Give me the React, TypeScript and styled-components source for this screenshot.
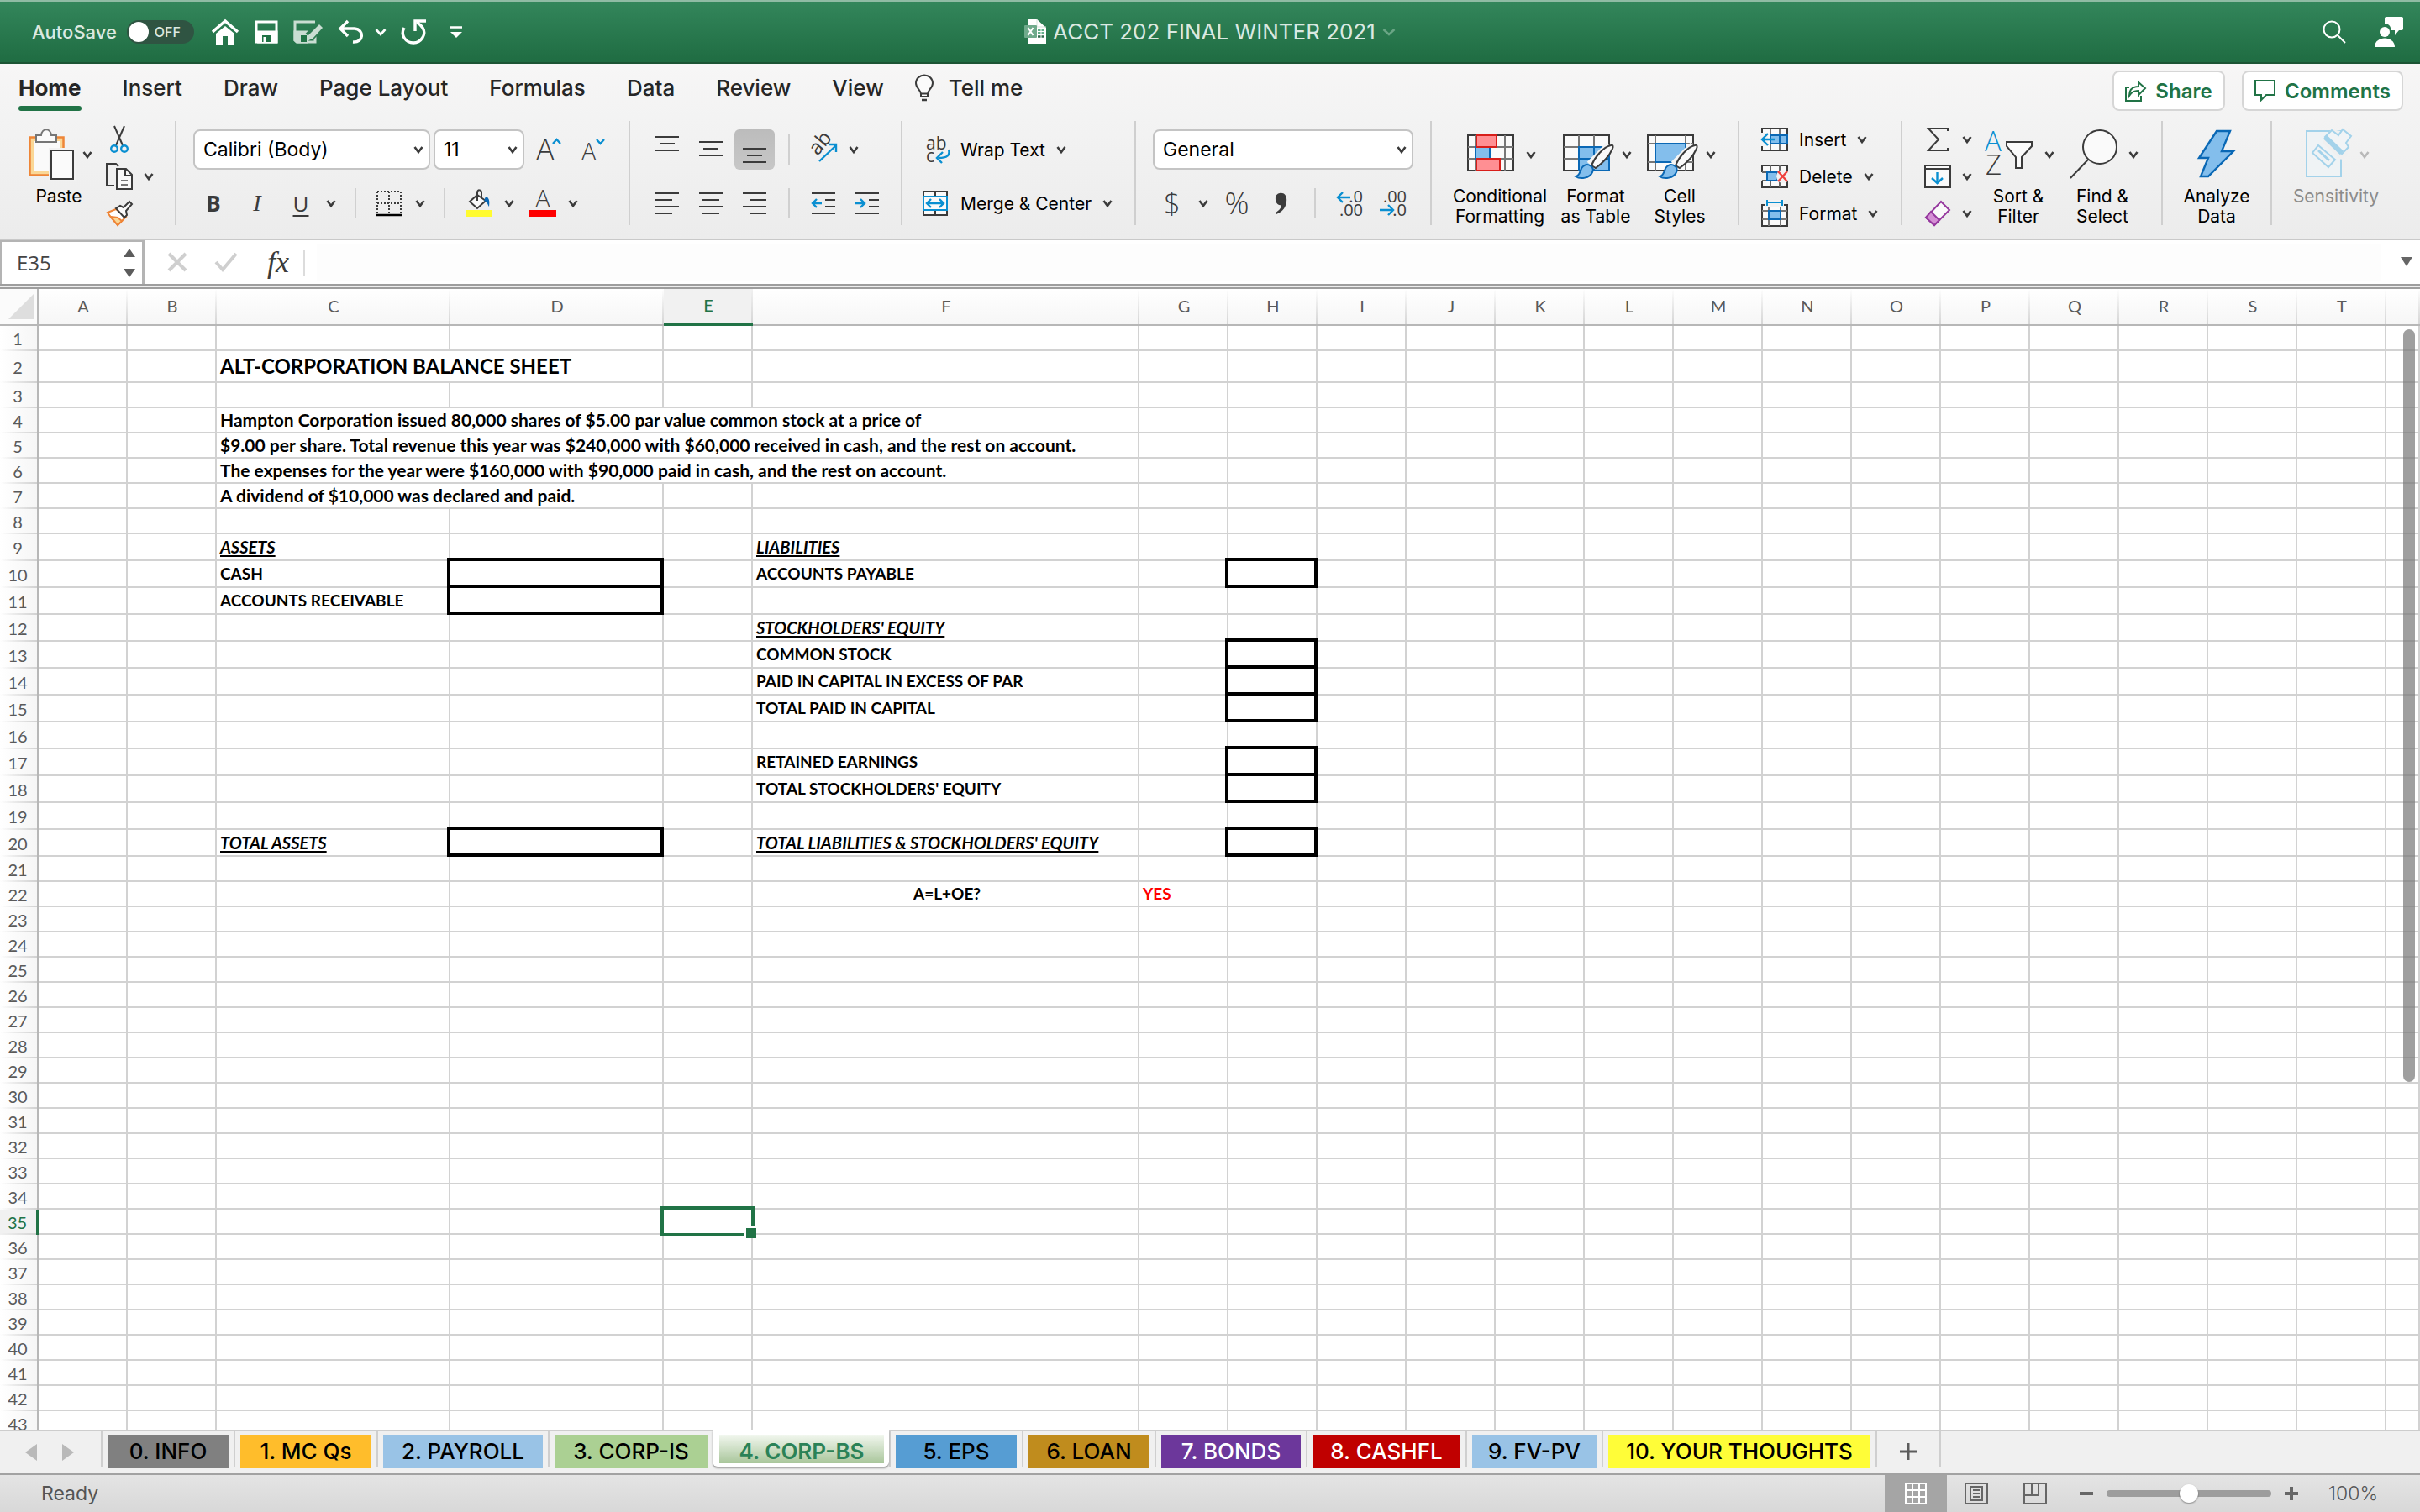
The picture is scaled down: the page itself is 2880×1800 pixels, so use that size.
import React from "react";
import styled, { createGlobalStyle, css } from "styled-components";

const UI = `Inter, "Liberation Sans", sans-serif`;
const CELL = `Lato, "Liberation Sans", sans-serif`;
const INK = "#3b3b3b";
const BLUE = "#0a8fd1";
const DEEP = "#0a68b5";
const SKY = "#83beec";
const GREEN = "#217346";
const LINE = "#d2d2d2";

const Global = createGlobalStyle`
  * { box-sizing: border-box; }
  html, body { margin: 0; height: 100%; }
  body { font-family: ${UI}; background: #fff; color: #000; overflow: hidden; }
  button, input, select { font: inherit; color: inherit; margin: 0; }
  svg { display: block; flex: none; overflow: visible; }
`;

const Window = styled.div`
  display: flex;
  flex-direction: column;
  height: 100vh;
`;

/* ---------- title bar ---------- */

const TitleBar = styled.header`
  display: grid;
  grid-template-columns: 1fr auto 1fr;
  align-items: center;
  height: 76px;
  padding: 0 20px;
  border-top: 2px solid #8fbba4;
  border-bottom: 2px solid #1c5434;
  background: linear-gradient(#33865b, #1f6c42);
  color: #dbe9e1;
`;

const TitleSide = styled.div<{ $end?: boolean }>`
  display: flex;
  align-items: center;
  justify-content: ${(p) => (p.$end ? "flex-end" : "flex-start")};
`;

const AutoSave = styled.label`
  display: flex;
  align-items: center;
  gap: 12px;
  margin: 0 20px 0 18px;
  font-size: 22px;
  font-weight: 500;
`;

const Track = styled.span`
  position: relative;
  display: flex;
  align-items: center;
  justify-content: flex-end;
  width: 80px;
  height: 28px;
  padding-right: 16px;
  border-radius: 14px;
  background: #2f5442;
  font-size: 16px;
`;

const Switch = styled.input`
  position: absolute;
  left: 2px;
  top: 2px;
  width: 24px;
  height: 24px;
  appearance: none;
  border-radius: 50%;
  background: #fff;
`;

const PlainButton = styled.button<{ $ml?: number; $w?: number }>`
  display: flex;
  align-items: center;
  justify-content: center;
  flex: none;
  width: ${(p) => (p.$w ? `${p.$w}px` : "auto")};
  margin-left: ${(p) => p.$ml ?? 0}px;
  padding: 0;
  border: 0;
  background: none;
  white-space: nowrap;
`;

const DocTitle = styled.h1`
  display: flex;
  align-items: center;
  gap: 8px;
  margin: 0;
  font-size: 26px;
  line-height: 32px;
  font-weight: 400;
`;

/* ---------- ribbon tabs ---------- */

const TabStrip = styled.div`
  display: flex;
  justify-content: space-between;
  height: 64px;
  padding: 0 20px 0 22px;
  background: linear-gradient(#f7f6f6, #f3f3f3);
`;

const TabLinks = styled.nav`
  display: flex;
  gap: 49px;
  padding-top: 12px;
`;

const TabLink = styled.a<{ $on?: boolean; $tight?: boolean }>`
  position: relative;
  display: flex;
  align-items: center;
  gap: 18px;
  height: 34px;
  margin-left: ${(p) => (p.$tight ? "-12px" : "0")};
  color: #262626;
  font-size: 26px;
  line-height: 34px;
  font-weight: ${(p) => (p.$on ? 700 : 500)};
  text-decoration: none;
  ${(p) =>
    p.$on &&
    css`
      &::after {
        content: "";
        position: absolute;
        left: 0;
        right: 0;
        bottom: -10px;
        height: 6px;
        border-radius: 3px;
        background: ${GREEN};
      }
    `}
`;

const TabActions = styled.div`
  display: flex;
  gap: 20px;
  padding-top: 8px;
`;

const OutlineButton = styled.button<{ $w: number }>`
  display: flex;
  align-items: center;
  justify-content: center;
  gap: 10px;
  width: ${(p) => p.$w}px;
  height: 48px;
  padding: 0;
  border: 2px solid #d6d6d6;
  border-radius: 8px;
  background: #fff;
  color: ${GREEN};
  font-size: 24px;
  font-weight: 600;
`;

/* ---------- ribbon ---------- */

const Ribbon = styled.section`
  display: flex;
  height: 146px;
  padding-top: 4px;
  border-bottom: 2px solid #c9c9c9;
  background: linear-gradient(#f3f3f3, #ececec);
`;

const Group = styled.div<{ $w: number; $pl?: number; $last?: boolean }>`
  display: flex;
  flex: none;
  width: ${(p) => p.$w}px;
  height: 124px;
  padding-left: ${(p) => p.$pl ?? 0}px;
  border-right: ${(p) => (p.$last ? 0 : 2)}px solid #cfcfcf;
`;

const Rows = styled.div`
  display: flex;
  flex-direction: column;
  gap: 16px;
  padding-top: 10px;
`;

const Row = styled.div`
  display: flex;
  align-items: center;
  height: 48px;
`;

const Stack = styled.div`
  display: flex;
  flex-direction: column;
`;

const ClipStack = styled(Stack)`
  margin-left: 14px;
`;

const StackItem = styled.button`
  display: flex;
  align-items: center;
  gap: 13px;
  height: 44px;
  flex: none;
  padding: 0;
  border: 0;
  background: none;
  font-size: 21px;
  white-space: nowrap;
`;

const IconSlot = styled.span`
  display: flex;
  justify-content: center;
  width: 32px;
`;

const Big = styled.button<{ $w: number; $ml?: number; $dim?: boolean }>`
  display: flex;
  flex-direction: column;
  align-items: center;
  flex: none;
  gap: 8px;
  width: ${(p) => p.$w}px;
  height: 124px;
  margin-left: ${(p) => p.$ml ?? 0}px;
  padding: 10px 0 0;
  border: 0;
  background: none;
  color: ${(p) => (p.$dim ? "#8b8b8b" : "#000")};
  font-size: 21px;
  line-height: 24px;
  white-space: pre;
`;

const BigIcon = styled.span<{ $menu?: boolean }>`
  display: flex;
  align-items: center;
  gap: 10px;
  height: 60px;
  padding-left: ${(p) => (p.$menu ? 4 : 0)}px;
`;

const Rule = styled.span<{ $ml: number }>`
  flex: none;
  width: 2px;
  height: 36px;
  margin-left: ${(p) => p.$ml}px;
  background: #d0d0d0;
`;

const Pressed = styled(PlainButton)`
  height: 48px;
  border-radius: 6px;
  background: linear-gradient(#bcbcbc, #c7c7c7);
`;

const SelectBox = styled.div<{ $w: number; $ml?: number }>`
  position: relative;
  flex: none;
  width: ${(p) => p.$w}px;
  height: 48px;
  margin-left: ${(p) => p.$ml ?? 0}px;
  svg {
    position: absolute;
    right: 8px;
    top: 20px;
    pointer-events: none;
  }
`;

const Select = styled.select`
  appearance: none;
  width: 100%;
  height: 100%;
  padding: 0 28px 0 10px;
  border: 2px solid #c4c4c4;
  border-radius: 8px;
  background: #fff;
  font-size: 23px;
`;

const Glyph = styled.span<{ $size?: number; $weight?: number; $italic?: boolean; $serif?: boolean; $under?: boolean }>`
  color: ${INK};
  font-family: ${(p) => (p.$serif ? `"Liberation Serif", serif` : `"Open Sans", sans-serif`)};
  font-size: ${(p) => p.$size ?? 26}px;
  line-height: 30px;
  font-weight: ${(p) => p.$weight ?? 400};
  font-style: ${(p) => (p.$italic ? "italic" : "normal")};
  text-decoration: ${(p) => (p.$under ? "underline" : "none")};
  text-underline-offset: 4px;
  text-decoration-thickness: 2px;
`;

/* ---------- formula bar ---------- */

const FormulaBar = styled.section`
  display: flex;
  height: 52px;
  flex: none;
  background: #fff;
`;

const NameBox = styled.div`
  display: flex;
  align-items: center;
  width: 172px;
  padding-right: 8px;
  border: solid #b4b4b4;
  border-width: 2px 3px 0 2px;
`;

const NameInput = styled.input`
  flex: 1;
  min-width: 0;
  height: 46px;
  padding: 0 0 2px 18px;
  border: 0;
  background: none;
  color: #444;
  font-size: 24px;
  font-family: "Open Sans", sans-serif;
  outline: none;
`;

const FormulaRule = styled.span`
  width: 2px;
  height: 30px;
  margin: 12px 0 0 14px;
  background: #dcdcdc;
`;

const FormulaInput = styled.input`
  flex: 1;
  height: 44px;
  margin: 4px 24px 4px 14px;
  border: 0;
  background: #fdfdfd;
  outline: none;
`;

const ExpandButton = styled(PlainButton)`
  margin-right: 9px;
`;

const Splitter = styled.div`
  flex: none;
  height: 6px;
  border: solid #9e9e9e;
  border-width: 2px 0;
  background: #efefef;
`;

/* ---------- grid ---------- */

const Sheet = styled.main`
  position: relative;
  flex: 1;
  min-height: 0;
  overflow: hidden;
`;

const Grid = styled.table`
  width: 100%;
  table-layout: fixed;
  border-spacing: 0;
  border-collapse: separate;
  font-family: ${CELL};
`;

const ColHead = styled.th<{ $on?: boolean }>`
  height: 44px;
  padding: 0 0 2px;
  border-bottom: ${(p) => (p.$on ? `4px solid ${GREEN}` : "2px solid #b7b7b7")};
  background: linear-gradient(rgba(208, 208, 208, 0), #d6d6d6) right / 2px 100% no-repeat,
    ${(p) => (p.$on ? "#f1f1f1" : "linear-gradient(#fff, #f6f6f6)")};
  color: ${(p) => (p.$on ? GREEN : "#5a5a5a")};
  font-size: 20px;
  line-height: 24px;
  font-weight: 400;
`;

const Corner = styled.th`
  height: 44px;
  padding: 0 4px 0 0;
  border-right: 2px solid #b7b7b7;
  border-bottom: 2px solid #b7b7b7;
  background: #fbfbfb;
  svg { margin-left: auto; }
`;

const RowHead = styled.th<{ $on?: boolean }>`
  padding: 0 2px 0 0;
  border-right: ${(p) => (p.$on ? `3px solid ${GREEN}` : "2px solid #b7b7b7")};
  background: linear-gradient(90deg, rgba(208, 208, 208, 0), #d2d2d2) bottom / 100% 2px no-repeat,
    ${(p) => (p.$on ? "#f1f1f1" : "linear-gradient(90deg, #fff, #f6f6f6)")};
  color: ${(p) => (p.$on ? GREEN : "#5a5a5a")};
  font-size: 20px;
  line-height: 24px;
  font-weight: 400;
`;

type CellLook = {
  $title?: boolean;
  $prose?: boolean;
  $head?: boolean;
  $box?: boolean;
  $sel?: boolean;
  $red?: boolean;
  $center?: boolean;
};

const cellSize = (p: CellLook) => (p.$title ? 24 : p.$prose ? 21 : p.$head ? 20 : 19);

const Cell = styled.td<CellLook>`
  position: relative;
  padding: 0 0 0 4px;
  border-right: 2px solid ${LINE};
  border-bottom: 2px solid ${LINE};
  color: ${(p) => (p.$red ? "#f00" : "#000")};
  font-size: ${cellSize}px;
  line-height: 24px;
  font-weight: 700;
  font-style: ${(p) => (p.$head ? "italic" : "normal")};
  text-decoration: ${(p) => (p.$head ? "underline" : "none")};
  text-decoration-thickness: 2px;
  text-decoration-skip-ink: none;
  text-underline-offset: 2px;
  text-align: ${(p) => (p.$center ? "center" : "left")};
  white-space: nowrap;
  ${(p) =>
    p.$box &&
    css`
      &::after {
        content: "";
        position: absolute;
        inset: -4px -2px -2px -4px;
        border: 4px solid #000;
      }
    `}
  ${(p) =>
    p.$sel &&
    css`
      z-index: 1;
      &::before {
        content: "";
        position: absolute;
        inset: -4px;
        border: 4px solid ${GREEN};
      }
      &::after {
        content: "";
        position: absolute;
        right: -6px;
        bottom: -6px;
        width: 12px;
        height: 12px;
        border: solid #fff;
        border-width: 2px 0 0 2px;
        background: ${GREEN};
      }
    `}
`;

const ScrollThumb = styled.div`
  position: absolute;
  z-index: 2;
  top: 48px;
  right: 6px;
  width: 14px;
  height: 66%;
  border-radius: 7px;
  background: rgba(118, 118, 118, 0.7);
`;

/* ---------- sheet tabs ---------- */

const SheetBar = styled.nav`
  display: flex;
  flex: none;
  height: 52px;
  border-top: 2px solid #cdcdcd;
  background: #f0f0f0;
`;

const SheetArrows = styled.div`
  display: flex;
  gap: 30px;
  width: 120px;
  height: 50px;
  padding: 15px 0 0 30px;
`;

const SheetSlot = styled.div`
  padding: 4px 6px 0;
  border-left: 2px solid #cfcfcf;
  height: 42px;
`;

const SheetTab = styled.button<{ $w: number; $bg: string; $fg: string }>`
  display: block;
  width: ${(p) => p.$w}px;
  height: 40px;
  padding: 0;
  border: 0;
  background: ${(p) => p.$bg};
  color: ${(p) => p.$fg};
  font-size: 26px;
  font-weight: 500;
  line-height: 40px;
  white-space: nowrap;
`;

const ActiveSlot = styled.div`
  position: relative;
  flex: none;
  height: 44px;
  margin-top: -2px;
  padding: 6px 6px 4px 8px;
  border-radius: 0 0 6px 6px;
  background: #fff;
  box-shadow: 0 2px 2px #9a9a9a;
`;

const ActiveTab = styled(SheetTab)`
  height: 34px;
  line-height: 40px;
  font-weight: 600;
`;

const AddSlot = styled.div`
  display: flex;
  align-items: center;
  justify-content: center;
  width: 78px;
  height: 42px;
  padding-top: 6px;
  border: solid #cfcfcf;
  border-width: 0 2px;
`;

/* ---------- status bar ---------- */

const StatusBar = styled.footer`
  display: flex;
  align-items: center;
  flex: none;
  height: 46px;
  padding: 0 49px;
  border-top: 2px solid #a2a2a2;
  background: linear-gradient(#e4e4e4, #d8d8d8);
  color: #555;
  font-size: 23px;
`;

const StatusText = styled.span`
  flex: 1;
`;

const ViewButton = styled.button<{ $on?: boolean }>`
  display: flex;
  align-items: center;
  justify-content: center;
  width: ${(p) => (p.$on ? 74 : 70)}px;
  height: 44px;
  padding: 0;
  border: 0;
  background: ${(p) => (p.$on ? "#a5a5a5" : "none")};
`;

const Zoom = styled.input`
  width: 196px;
  height: 24px;
  margin: 0 16px;
  appearance: none;
  background: none;
  &::-webkit-slider-runnable-track {
    height: 8px;
    border-radius: 4px;
    background: #9d9d9d;
  }
  &::-webkit-slider-thumb {
    appearance: none;
    width: 22px;
    height: 22px;
    margin-top: -7px;
    border-radius: 50%;
    background: #fff;
    box-shadow: 0 1px 2px rgba(0, 0, 0, 0.4);
  }
`;

const Percent = styled.span`
  width: 60px;
  margin-left: 36px;
  font-weight: 300;
  white-space: nowrap;
`;

/* ---------- drawings ---------- */

const Svg = ({ w, h, children, ...rest }: any) => (
  <svg width={w} height={h} viewBox={`0 0 ${w} ${h}`} fill="none" stroke={INK} strokeWidth={2} aria-hidden {...rest}>
    {children}
  </svg>
);

const Chevron = ({ color = INK, w = 12 }: { color?: string; w?: number }) => (
  <Svg w={w} h={9} stroke={color} strokeWidth={2.6}>
    <path d={`M1.5 1 L${w / 2} 7 L${w - 1.5} 1`} />
  </Svg>
);

const T = ({ children, ...rest }: any) => (
  <text stroke="none" fill={INK} fontFamily="Open Sans" fontWeight={300} {...rest}>
    {children}
  </text>
);

const PasteIcon = () => (
  <Svg w={54} h={60}>
    <rect x="1.5" y="9.5" width="40" height="45" fill="#fad796" stroke="#ee8537" strokeWidth="2.5" />
    <rect x="6" y="14" width="31" height="36" fill="#fafafa" stroke="none" />
    <path d="M9 15V7h6c1-9 11-9 12 0h6v8z" fill="#fafafa" stroke="#767676" strokeWidth="2" />
    <rect x="24" y="22" width="32" height="40" fill="#f2f2f2" stroke="none" />
    <rect x="27" y="25" width="26" height="34" fill="#fafafa" />
  </Svg>
);

const CutIcon = () => (
  <Svg w={22} h={32}>
    <path d="M5 0l10 23M17 0L7 23" />
    <circle cx="5" cy="27" r="3.8" stroke={BLUE} strokeWidth="2.4" />
    <circle cx="17" cy="27" r="3.8" stroke={BLUE} strokeWidth="2.4" />
  </Svg>
);

const CopyIcon = () => (
  <Svg w={32} h={32}>
    <path d="M10 27H1V1h11l3 3" />
    <path d="M13 7h11l7 7v17H13z" fill="#fafafa" />
    <path d="M23 7v8h8" />
    <path d="M18 21h8M18 26h8" stroke="#777" />
  </Svg>
);

const PainterIcon = () => (
  <Svg w={32} h={32}>
    <path d="M12 11L2 15l5 7 7 8 10-10z" fill="#fff" stroke="#ee8537" />
    <path d="M6 20l8 1 5 4-5 5z" fill="#fad796" stroke="#ee8537" />
    <path d="M12 10l5-3 4 2 7-7 3 3-7 8 1 5-3 3z" fill="#fafafa" />
  </Svg>
);

const lines = (rows: [number, number, number][]) => (
  <path d={rows.map(([a, b, y]) => `M${a} ${y}H${b}`).join("")} strokeWidth="2.2" />
);

const VAlignIcon = ({ y }: { y: number }) => (
  <Svg w={28} h={32}>{lines([[0, 28, y], [5, 23, y + 8], [0, 28, y + 16]])}</Svg>
);

const HAlignIcon = ({ a, b }: { a: number; b: number }) => (
  <Svg w={28} h={28}>{lines([[0, 28, 2], [a, b, 10], [0, 28, 18], [a, b, 26]])}</Svg>
);

const IndentIcon = ({ out }: { out?: boolean }) => (
  <Svg w={28} h={28}>
    {lines([[0, 28, 2], [16, 28, 10], [16, 28, 18], [0, 28, 26]])}
    <path d={out ? "M12 14H2M6 9l-5 5 5 5" : "M0 14h10M6 9l5 5-5 5"} stroke={BLUE} strokeWidth="2.4" />
  </Svg>
);

const OrientIcon = () => (
  <Svg w={32} h={32}>
    <T x="0" y="0" fontSize="24" fontWeight="400" transform="translate(9 24) rotate(-50)">ab</T>
    <path d="M11 30L31 11M22 10h9v9" stroke={BLUE} strokeWidth="2.4" />
  </Svg>
);

const WrapIcon = () => (
  <Svg w={32} h={34}>
    <T x="4" y="17" fontSize="21" fontWeight="400">ab</T>
    <T x="4" y="32" fontSize="21" fontWeight="400">c</T>
    <path d="M31 17c2 7-2 10-12 10M24 20l-7 7 6 6" stroke={BLUE} strokeWidth="2.4" />
  </Svg>
);

const MergeIcon = () => (
  <Svg w={32} h={32}>
    <rect x="1" y="2" width="28" height="28" fill="#fafafa" />
    <path d="M15 2v28" />
    <rect x="1" y="8" width="28" height="16" fill="#fafafa" stroke={BLUE} />
    <path d="M5 16h20M10 11l-5 5 5 5M20 11l5 5-5 5" stroke={BLUE} strokeWidth="2.4" />
  </Svg>
);

const BordersIcon = () => (
  <Svg w={30} h={30}>
    <path d="M1 1h28M1 15h28M1 1v28M15 1v28M29 1v28" strokeDasharray="2 2" />
    <path d="M0 29h30" stroke="#000" strokeWidth="2.5" />
  </Svg>
);

const FillIcon = () => (
  <Svg w={32} h={32}>
    <path d="M14 6L5 14l9 8 10-9z" fill="#fafafa" />
    <path d="M14 13V3c0-4 5-3 5 0v7" />
    <path d="M24 8c4 1 5 5 4 12-2-3-2-6-6-7z" fill={DEEP} stroke="none" />
    <rect x="0" y="24" width="32" height="8" fill="#fffb30" stroke="none" />
  </Svg>
);

const FontColorIcon = () => (
  <Svg w={32} h={32}>
    <T x="16" y="21" fontSize="29" textAnchor="middle">A</T>
    <rect x="0" y="24" width="32" height="8" fill="#fe0000" stroke="none" />
  </Svg>
);

const ResizeFontIcon = ({ small }: { small?: boolean }) => (
  <Svg w={small ? 28 : 30} h={32}>
    <T x="0" y="29" fontSize={small ? 29 : 36}>A</T>
    <path d={small ? "M18 4l4.500 5 4.500-5" : "M20 9l4.500-5 4.500 5"} stroke={BLUE} strokeWidth="2.4" />
  </Svg>
);

const CommaIcon = () => (
  <Svg w={18} h={32}>
    <path d="M7 4c6-1 9 4 8 10-1 8-5 12-12 15l-1-2c5-3 7-6 7-9-8 2-10-13-2-14z" fill={INK} stroke="none" />
  </Svg>
);

const DecimalIcon = ({ more }: { more?: boolean }) => (
  <Svg w={32} h={32}>
    <T x="32" y="15" fontSize="20" fontWeight="400" textAnchor="end">{more ? ".0" : ".00"}</T>
    <T x="32" y="31" fontSize="20" fontWeight="400" textAnchor="end">{more ? ".00" : ".0"}</T>
    <path d={more ? "M17 9H2M8 3L2 9l6 6" : "M0 24h16M10 18l6 6-6 6"} stroke={BLUE} strokeWidth="2.4" />
  </Svg>
);

const CondIcon = () => (
  <Svg w={60} h={60}>
    <rect x="1" y="7" width="54" height="42" fill="#fafafa" />
    <path d="M10 7v42M45 7v42M1 21h54M1 35h54" stroke="#777" />
    <rect x="10" y="21" width="17" height="14" fill={SKY} stroke={DEEP} />
    <rect x="11" y="7" width="24" height="14" fill="#ff8f93" stroke="#d81e1a" />
    <rect x="11" y="35" width="28" height="14" fill="#ff8f93" stroke="#d81e1a" />
  </Svg>
);

const Brush = () => (
  <>
    <path d="M33 43L56 20" stroke="#f5f5f5" strokeWidth="12" />
    <path d="M34 43c4-10 14-22 23-24 3-1 3 2 2 4-4 9-13 18-20 23z" fill="#fafafa" />
    <path d="M15 56c6 0 5-9 9-12 6-5 14 1 11 7-3 7-14 9-20 5z" fill={SKY} stroke={DEEP} />
  </>
);

const TableIcon = () => (
  <Svg w={60} h={60}>
    <rect x="1" y="7" width="54" height="42" fill="#fafafa" />
    <path d="M19 7v42M37 7v14M1 21h54M1 35h18" stroke="#777" />
    <rect x="19" y="21" width="36" height="28" fill={SKY} stroke={DEEP} />
    <path d="M37 21v28M19 35h36" stroke={DEEP} />
    <Brush />
  </Svg>
);

const StylesIcon = () => (
  <Svg w={60} h={60}>
    <rect x="1" y="7" width="54" height="42" fill="#fafafa" />
    <path d="M10 7v42M46 7v42M1 17h54M1 39h54" stroke="#777" />
    <rect x="10" y="17" width="36" height="22" fill={SKY} stroke={DEEP} />
    <Brush />
  </Svg>
);

const InsertIcon = () => (
  <Svg w={32} h={32}>
    <rect x="1" y="3" width="30" height="26" fill="#fafafa" />
    <path d="M11 3v26M22 3v26" stroke="#777" />
    <rect x="11" y="11" width="20" height="10" fill={SKY} stroke={DEEP} />
    <path d="M22 11v10" stroke={DEEP} />
    <path d="M0 8h8v16H0z" fill="#f2f2f2" stroke="none" />
    <path d="M16 16H2M8 9l-7 7 7 7" stroke={BLUE} strokeWidth="2.4" />
  </Svg>
);

const DeleteIcon = () => (
  <Svg w={32} h={32}>
    <path d="M1 11V3h30v8M1 21v8h30v-8" fill="#fafafa" />
    <path d="M1 11h10M1 21h10M11 3v8M22 3v8M11 21v8M22 21v8" stroke="#666" />
    <rect x="7" y="11" width="12" height="10" fill={SKY} stroke={DEEP} />
    <circle cx="26" cy="16" r="8" fill="#f2f2f2" stroke="none" />
    <path d="M20 10l11 12M31 10L20 22" stroke="#f0423f" strokeWidth="2.4" />
  </Svg>
);

const FormatIcon = () => (
  <Svg w={32} h={32}>
    <rect x="1" y="6" width="30" height="25" fill="#fafafa" />
    <path d="M9 6v25M23 6v25M1 13h30M1 23h30" stroke="#777" />
    <rect x="5" y="0" width="22" height="9" fill="#f2f2f2" stroke="none" />
    <rect x="9" y="13" width="14" height="10" fill={SKY} stroke={DEEP} />
    <path d="M7 3h18M7 0v7M25 0v7" stroke={BLUE} />
  </Svg>
);

const SumIcon = () => (
  <Svg w={26} h={30}>
    <path d="M25 5V2H2l12 13L2 28h23v-3" />
  </Svg>
);

const FillDownIcon = () => (
  <Svg w={32} h={30}>
    <rect x="1" y="2" width="30" height="26" fill="#fafafa" />
    <path d="M1 6h30" />
    <path d="M15.500 10v13M9 17l6.500 6 6.500-6" stroke={BLUE} strokeWidth="2.4" />
  </Svg>
);

const EraserIcon = () => (
  <Svg w={32} h={32} stroke="#95389e">
    <path d="M20 2l10 10-18 18L2 21z" fill="#fafafa" />
    <path d="M8 14l10 10-6 6-10-9z" fill="#d590d5" />
  </Svg>
);

const SortIcon = () => (
  <Svg w={60} h={60}>
    <T x="-1" y="26" fontSize="33" fill={BLUE}>A</T>
    <T x="0" y="54" fontSize="33">Z</T>
    <path d="M25 15h30v5L43 33v13h-7V33L25 20z" fill="#fafafa" />
  </Svg>
);

const FindIcon = () => (
  <Svg w={60} h={60}>
    <circle cx="36" cy="21" r="20" fill="#fafafa" />
    <path d="M22 36L1 58" />
  </Svg>
);

const AnalyzeIcon = () => (
  <Svg w={60} h={60} stroke={DEEP}>
    <path d="M30 2h16L36 26h14L20 56h-9l9-22H9z" fill={SKY} strokeWidth="2.4" />
  </Svg>
);

const SensitivityIcon = () => (
  <Svg w={54} h={60} stroke="#a3d2ea">
    <rect x="1" y="2" width="41" height="54" fill="#eff3f5" />
    <path d="M20 16L30 0l12 2 8 28-8 6z" fill="#f0f0f0" stroke="none" />
    <path d="M15 19l20 17-8 9L8 28z" fill="#eff3f5" />
    <path d="M15 25l13 12" strokeWidth="3" />
    <path d="M23 9l8-8 8 6 5-7 10 8-6 8 3 5-8 8z" fill="#f1f4f6" />
    <path d="M23 9l20 19" strokeWidth="6" />
  </Svg>
);

const HomeIcon = () => (
  <Svg w={32} h={30} stroke="#fff">
    <path d="M1 15L16 2l15 13" strokeWidth="3.500" />
    <path d="M5 17L16 8l11 9v13h-8V20h-6v10H5z" fill="#fff" stroke="none" />
  </Svg>
);

const SaveIcon = () => (
  <Svg w={28} h={28} stroke="#fff" strokeWidth={3}>
    <path d="M2 2h24v24H4l-2-2z" />
    <path d="M2 14h24v12H2z" fill="#fff" />
    <path d="M9 18h10v8H9z" fill={GREEN} stroke="none" />
    <path d="M12 20v6" strokeWidth="3" />
  </Svg>
);

const SaveAsIcon = () => (
  <Svg w={36} h={28} stroke="#c9ddd2" strokeWidth={3}>
    <path d="M26 2H2v22l3 2h21V16" />
    <path d="M2 14h18l-4 12H4l-2-2z" fill="#c9ddd2" />
    <path d="M9 18h7v8H9z" fill={GREEN} stroke="none" />
    <path d="M19 20L32 6" stroke="#2b7a50" strokeWidth="12" />
    <path d="M16 25l2-7L31 5l4 4-12 13z" fill="#c9ddd2" stroke="none" />
  </Svg>
);

const UndoIcon = () => (
  <Svg w={32} h={28} stroke="#fff" strokeWidth={3.4}>
    <path d="M12 1L3 10l9 9M4 10h16c12 1 11 17-2 16" />
  </Svg>
);

const RedoIcon = () => (
  <Svg w={30} h={30} stroke="#fff" strokeWidth={3.4}>
    <path d="M4 10c-5 9 2 18 11 18s16-10 11-18c-2-3-4-5-7-6M17 14V2h13" />
  </Svg>
);

const MoreIcon = () => (
  <Svg w={16} h={14} stroke="#fff">
    <path d="M1 1.500h14" strokeWidth="2.5" />
    <path d="M1 7h14l-7 7z" fill="#fff" stroke="none" />
  </Svg>
);

const DocIcon = () => (
  <Svg w={26} h={30}>
    <path d="M4 0h11l11 10v19H4z" fill="#fff" stroke="none" />
    <path d="M15 0v9h11" stroke="#d9e3dd" strokeWidth="1" />
    <path d="M16 12.500h8M16 16.500h8" stroke="#63b08a" strokeWidth="3" strokeDasharray="3.500 1" />
    <path d="M16 20.500h8" stroke="#2f6b4c" strokeWidth="2.500" strokeDasharray="3.500 1" />
    <rect x="0" y="7" width="15" height="15" rx="1" fill="#6faa8b" stroke="none" />
    <path d="M4.500 10l6 9M10.500 10l-6 9" stroke="#fff" />
  </Svg>
);

const SearchIcon = () => (
  <Svg w={28} h={28} stroke="#fff">
    <circle cx="11" cy="11" r="9.500" />
    <path d="M18 18l9 9" />
  </Svg>
);

const PersonIcon = () => (
  <Svg w={34} h={36} stroke="none" fill="#fff">
    <path d="M12 2q0-2 2-2h18q2 0 2 2v12q0 2-2 2h-3l-5 6v-6h-5c1-4-2-8-7-8z" />
    <circle cx="12" cy="18" r="6" />
    <path d="M0 36c0-14 24-14 24 0z" />
  </Svg>
);

const BulbIcon = () => (
  <Svg w={22} h={32}>
    <path d="M7 23c0-5-6-7-6-13a10 9.500 0 0 1 20 0c0 6-6 8-6 13v3H7zM7 22.500h8" fill="#fbfbfb" />
    <path d="M8 30h6" strokeWidth="2.5" />
  </Svg>
);

const ShareIcon = () => (
  <Svg w={26} h={26} stroke={GREEN}>
    <path d="M5 9H1v16h18v-6" />
    <path d="M5 19c0-8 5-11 11-11V3l8 7-8 8v-5c-5 0-8 1-11 6z" />
  </Svg>
);

const CommentIcon = () => (
  <Svg w={26} h={26} stroke={GREEN}>
    <path d="M1 1h23v17H14l-6 6v-6H1z" />
  </Svg>
);

const Spinner = () => (
  <Svg w={14} h={34} fill="#5c5c5c" stroke="none">
    <path d="M0 10L7 0l7 10zM0 24h14l-7 10z" />
  </Svg>
);

/* ---------- data ---------- */

const COLUMNS = [..."ABCDEFGHIJKLMNOPQRST"];
const COL_WIDTH: Record<string, number> = { C: 278, D: 254, F: 460 };
const ALL = [...COLUMNS, ""];

type CellData = CellLook & { text?: string; span?: number };

const CELLS: Record<string, CellData> = {
  C2: { text: "ALT-CORPORATION BALANCE SHEET", span: 2, $title: true },
  C4: {
    text: "Hampton Corporation issued 80,000 shares of $5.00 par value common stock at a price of",
    span: 4,
    $prose: true,
  },
  C5: {
    text: "$9.00 per share. Total revenue this year was $240,000 with $60,000 received in cash, and the rest on account.",
    span: 4,
    $prose: true,
  },
  C6: {
    text: "The expenses for the year were $160,000 with $90,000 paid in cash, and the rest on account.",
    span: 4,
    $prose: true,
  },
  C7: { text: "A dividend of $10,000 was declared and paid.", span: 2, $prose: true },
  C9: { text: "ASSETS", $head: true },
  F9: { text: "LIABILITIES", $head: true },
  C10: { text: "CASH" },
  D10: { $box: true },
  F10: { text: "ACCOUNTS PAYABLE" },
  H10: { $box: true },
  C11: { text: "ACCOUNTS RECEIVABLE" },
  D11: { $box: true },
  F12: { text: "STOCKHOLDERS' EQUITY", $head: true },
  F13: { text: "COMMON STOCK" },
  H13: { $box: true },
  F14: { text: "PAID IN CAPITAL IN EXCESS OF PAR" },
  H14: { $box: true },
  F15: { text: "TOTAL PAID IN CAPITAL" },
  H15: { $box: true },
  F17: { text: "RETAINED EARNINGS" },
  H17: { $box: true },
  F18: { text: "TOTAL STOCKHOLDERS' EQUITY" },
  H18: { $box: true },
  C20: { text: "TOTAL ASSETS", $head: true },
  D20: { $box: true },
  F20: { text: "TOTAL LIABILITIES & STOCKHOLDERS' EQUITY", $head: true },
  H20: { $box: true },
  F22: { text: "A=L+OE?", $center: true },
  G22: { text: "YES", $red: true },
  E35: { $sel: true },
};

const rowHeight = (n: number) => (n === 2 ? 38 : n >= 9 && n <= 20 ? 32 : 30);

const SHEETS: { name: string; w: number; bg: string; fg?: string; active?: boolean }[] = [
  { name: "0. INFO", w: 144, bg: "#808080" },
  { name: "1. MC Qs", w: 156, bg: "#ffbd2b" },
  { name: "2. PAYROLL", w: 190, bg: "#99c3e6" },
  { name: "3. CORP-IS", w: 182, bg: "#abd093" },
  { name: "4. CORP-BS", w: 196, bg: "linear-gradient(#f2f7ef, #a9c69b)", fg: "#2b8257", active: true },
  { name: "5. EPS", w: 144, bg: "#569dd3" },
  { name: "6. LOAN", w: 144, bg: "#c08c1d" },
  { name: "7. BONDS", w: 166, bg: "#6c379b", fg: "#fff" },
  { name: "8. CASHFL", w: 176, bg: "#c00000", fg: "#fff" },
  { name: "9. FV-PV", w: 148, bg: "#99c3e6" },
  { name: "10. YOUR THOUGHTS", w: 312, bg: "#fffd38" },
];

const GridRow = ({ n }: { n: number }) => {
  const cells: React.ReactNode[] = [];
  for (let i = 0; i < ALL.length; i++) {
    const { text, span = 1, ...look } = CELLS[`${ALL[i]}${n}`] ?? {};
    cells.push(
      <Cell key={i} colSpan={span} {...look}>
        {text}
      </Cell>
    );
    i += span - 1;
  }
  return (
    <tr style={{ height: rowHeight(n) }}>
      <RowHead scope="row" $on={n === 35}>{n}</RowHead>
      {cells}
    </tr>
  );
};

const BigTool = ({ label, icon, w, ml, menu = true, dim }: any) => (
  <Big $w={w} $ml={ml} $dim={dim} disabled={dim}>
    <BigIcon $menu={menu}>
      {icon}
      {menu && <Chevron color={dim ? "#b9b9b9" : INK} />}
    </BigIcon>
    <span>{label}</span>
  </Big>
);

const Drop = ({ ml, label }: { ml: number; label: string }) => (
  <PlainButton $ml={ml} $w={12} aria-label={label}>
    <Chevron />
  </PlainButton>
);

const Picker = ({ w, ml, label, value }: { w: number; ml?: number; label: string; value: string }) => (
  <SelectBox $w={w} $ml={ml}>
    <Select aria-label={label} defaultValue={value}>
      <option>{value}</option>
    </Select>
    <Chevron />
  </SelectBox>
);

export default function App() {
  return (
    <Window>
      <Global />
      <TitleBar>
        <TitleSide>
          <AutoSave>
            AutoSave
            <Track>
              <Switch type="checkbox" />
              OFF
            </Track>
          </AutoSave>
          <PlainButton $w={34} aria-label="Home"><HomeIcon /></PlainButton>
          <PlainButton $ml={18} $w={28} aria-label="Save"><SaveIcon /></PlainButton>
          <PlainButton $ml={18} $w={36} aria-label="Save as"><SaveAsIcon /></PlainButton>
          <PlainButton $ml={17} $w={32} aria-label="Undo"><UndoIcon /></PlainButton>
          <PlainButton $ml={12} $w={14} aria-label="Undo history"><Chevron color="#fff" w={14} /></PlainButton>
          <PlainButton $ml={17} $w={30} aria-label="Redo"><RedoIcon /></PlainButton>
          <PlainButton $ml={28} $w={16} aria-label="Customize toolbar"><MoreIcon /></PlainButton>
        </TitleSide>
        <DocTitle>
          <DocIcon />
          ACCT 202 FINAL WINTER 2021
          <Chevron color="#6aa585" w={16} />
        </DocTitle>
        <TitleSide $end>
          <PlainButton $w={28} aria-label="Search"><SearchIcon /></PlainButton>
          <PlainButton $ml={34} $w={34} aria-label="Account"><PersonIcon /></PlainButton>
        </TitleSide>
      </TitleBar>

      <TabStrip>
        <TabLinks>
          <TabLink href="#home" $on>Home</TabLink>
          {["Insert", "Draw", "Page Layout", "Formulas", "Data", "Review", "View"].map((t) => (
            <TabLink key={t} href={`#${t}`}>{t}</TabLink>
          ))}
          <TabLink href="#tell-me" $tight>
            <BulbIcon />
            Tell me
          </TabLink>
        </TabLinks>
        <TabActions>
          <OutlineButton $w={134}><ShareIcon />Share</OutlineButton>
          <OutlineButton $w={192}><CommentIcon />Comments</OutlineButton>
        </TabActions>
      </TabStrip>

      <Ribbon>
        <Group $w={210} $pl={28}>
          <BigTool label="Paste" icon={<PasteIcon />} w={84} />
          <ClipStack>
            <StackItem aria-label="Cut"><IconSlot><CutIcon /></IconSlot></StackItem>
            <StackItem aria-label="Copy"><CopyIcon /><Chevron /></StackItem>
            <StackItem aria-label="Format painter"><PainterIcon /></StackItem>
          </ClipStack>
        </Group>

        <Group $w={540} $pl={20}>
          <Rows>
            <Row>
              <Picker w={282} label="Font" value="Calibri (Body)" />
              <Picker w={108} ml={4} label="Font size" value="11" />
              <PlainButton $ml={14} $w={30} aria-label="Increase font size"><ResizeFontIcon /></PlainButton>
              <PlainButton $ml={24} $w={28} aria-label="Decrease font size"><ResizeFontIcon small /></PlainButton>
            </Row>
            <Row>
              <PlainButton $ml={10} $w={28}><Glyph $weight={700}>B</Glyph></PlainButton>
              <PlainButton $ml={24} $w={28}><Glyph $serif $italic $size={28}>I</Glyph></PlainButton>
              <PlainButton $ml={24} $w={28}><Glyph $under>U</Glyph></PlainButton>
              <Drop ml={16} label="Underline style" />
              <Rule $ml={22} />
              <PlainButton $ml={24} $w={30} aria-label="Borders"><BordersIcon /></PlainButton>
              <Drop ml={16} label="Border style" />
              <Rule $ml={22} />
              <PlainButton $ml={24} $w={32} aria-label="Fill color"><FillIcon /></PlainButton>
              <Drop ml={14} label="Fill colors" />
              <PlainButton $ml={18} $w={32} aria-label="Font color"><FontColorIcon /></PlainButton>
              <Drop ml={14} label="Font colors" />
            </Row>
          </Rows>
        </Group>

        <Group $w={324} $pl={30}>
          <Rows>
            <Row>
              <PlainButton $w={28} aria-label="Top align"><VAlignIcon y={1} /></PlainButton>
              <PlainButton $ml={24} $w={28} aria-label="Middle align"><VAlignIcon y={7} /></PlainButton>
              <Pressed $ml={14} $w={48} aria-label="Bottom align" aria-pressed><VAlignIcon y={15} /></Pressed>
              <Rule $ml={16} />
              <PlainButton $ml={24} $w={32} aria-label="Orientation"><OrientIcon /></PlainButton>
              <Drop ml={14} label="Orientation options" />
            </Row>
            <Row>
              <PlainButton $w={28} aria-label="Align left"><HAlignIcon a={0} b={20} /></PlainButton>
              <PlainButton $ml={24} $w={28} aria-label="Center"><HAlignIcon a={4} b={24} /></PlainButton>
              <PlainButton $ml={24} $w={28} aria-label="Align right"><HAlignIcon a={8} b={28} /></PlainButton>
              <Rule $ml={26} />
              <PlainButton $ml={26} $w={28} aria-label="Decrease indent"><IndentIcon out /></PlainButton>
              <PlainButton $ml={24} $w={28} aria-label="Increase indent"><IndentIcon /></PlainButton>
            </Row>
          </Rows>
        </Group>

        <Group $w={278} $pl={24}>
          <Rows>
            <Row><StackItem><WrapIcon />Wrap Text<Chevron /></StackItem></Row>
            <Row><StackItem><MergeIcon />Merge &amp; Center<Chevron /></StackItem></Row>
          </Rows>
        </Group>

        <Group $w={352} $pl={20}>
          <Rows>
            <Row><Picker w={310} label="Number format" value="General" /></Row>
            <Row>
              <PlainButton $ml={14} $w={18}><Glyph $size={34} $weight={300}>$</Glyph></PlainButton>
              <Drop ml={22} label="Currency" />
              <PlainButton $ml={18} $w={32}><Glyph $size={36} $weight={300}>%</Glyph></PlainButton>
              <PlainButton $ml={28} $w={18} aria-label="Comma style"><CommaIcon /></PlainButton>
              <Rule $ml={30} />
              <PlainButton $ml={24} $w={32} aria-label="Increase decimal"><DecimalIcon more /></PlainButton>
              <PlainButton $ml={20} $w={32} aria-label="Decrease decimal"><DecimalIcon /></PlainButton>
            </Row>
          </Rows>
        </Group>

        <Group $w={366} $pl={22}>
          <BigTool label={"Conditional\nFormatting"} icon={<CondIcon />} w={118} />
          <BigTool label={"Format\nas Table"} icon={<TableIcon />} w={90} ml={10} />
          <BigTool label={"Cell\nStyles"} icon={<StylesIcon />} w={90} ml={10} />
        </Group>

        <Group $w={194} $pl={26}>
          <Stack>
            <StackItem><InsertIcon />Insert<Chevron /></StackItem>
            <StackItem><DeleteIcon />Delete<Chevron /></StackItem>
            <StackItem><FormatIcon />Format<Chevron /></StackItem>
          </Stack>
        </Group>

        <Group $w={310} $pl={26}>
          <Stack>
            <StackItem aria-label="AutoSum"><IconSlot><SumIcon /></IconSlot><Chevron /></StackItem>
            <StackItem aria-label="Fill"><FillDownIcon /><Chevron /></StackItem>
            <StackItem aria-label="Clear"><EraserIcon /><Chevron /></StackItem>
          </Stack>
          <BigTool label={"Sort &\nFilter"} icon={<SortIcon />} w={90} ml={10} />
          <BigTool label={"Find &\nSelect"} icon={<FindIcon />} w={90} ml={10} />
        </Group>

        <Group $w={130}>
          <BigTool label={"Analyze\nData"} icon={<AnalyzeIcon />} w={128} menu={false} />
        </Group>

        <Group $w={150} $pl={24} $last>
          <BigTool label="Sensitivity" icon={<SensitivityIcon />} w={104} dim />
        </Group>
      </Ribbon>

      <FormulaBar>
        <NameBox>
          <NameInput aria-label="Name box" defaultValue="E35" />
          <Spinner />
        </NameBox>
        <PlainButton $ml={27} $w={24} aria-label="Cancel">
          <Svg w={24} h={24} stroke="#cfcfcf" strokeWidth={4}><path d="M2 2l20 20M22 2L2 22" /></Svg>
        </PlainButton>
        <PlainButton $ml={32} $w={28} aria-label="Enter">
          <Svg w={28} h={24} stroke="#cfcfcf" strokeWidth={4}><path d="M2 12l8 9L26 2" /></Svg>
        </PlainButton>
        <PlainButton $ml={32} $w={32} aria-label="Insert function">
          <Glyph $serif $italic $size={36}>fx</Glyph>
        </PlainButton>
        <FormulaRule />
        <FormulaInput aria-label="Formula bar" />
        <ExpandButton aria-label="Expand formula bar">
          <Svg w={14} h={12} fill="#666" stroke="none"><path d="M0 0h14L7 11z" /></Svg>
        </ExpandButton>
      </FormulaBar>
      <Splitter />

      <Sheet>
        <Grid>
          <colgroup>
            <col style={{ width: 46 }} />
            {COLUMNS.map((c) => (
              <col key={c} style={{ width: COL_WIDTH[c] ?? 106 }} />
            ))}
            <col />
          </colgroup>
          <thead>
            <tr>
              <Corner>
                <Svg w={30} h={30} fill="#dedede" stroke="none"><path d="M30 0v30H0z" /></Svg>
              </Corner>
              {ALL.map((c) => (
                <ColHead key={c} scope="col" $on={c === "E"}>{c}</ColHead>
              ))}
            </tr>
          </thead>
          <tbody>
            {Array.from({ length: 43 }, (_, i) => (
              <GridRow key={i} n={i + 1} />
            ))}
          </tbody>
        </Grid>
        <ScrollThumb />
      </Sheet>

      <SheetBar>
        <SheetArrows>
          <Svg w={14} h={20} fill="#b9b9b9" stroke="none"><path d="M14 0v20L0 10z" /></Svg>
          <Svg w={14} h={20} fill="#b9b9b9" stroke="none"><path d="M0 0v20l14-10z" /></Svg>
        </SheetArrows>
        {SHEETS.map((s) =>
          s.active ? (
            <ActiveSlot key={s.name}>
              <ActiveTab $w={s.w} $bg={s.bg} $fg={s.fg ?? "#000"}>{s.name}</ActiveTab>
            </ActiveSlot>
          ) : (
            <SheetSlot key={s.name}>
              <SheetTab $w={s.w} $bg={s.bg} $fg={s.fg ?? "#000"}>{s.name}</SheetTab>
            </SheetSlot>
          )
        )}
        <AddSlot>
          <PlainButton aria-label="Add sheet">
            <Svg w={20} h={20} stroke="#5c5c5c" strokeWidth={3}><path d="M10 0v20M0 10h20" /></Svg>
          </PlainButton>
        </AddSlot>
      </SheetBar>

      <StatusBar>
        <StatusText>Ready</StatusText>
        <ViewButton $on aria-label="Normal view">
          <Svg w={26} h={26} stroke="#fff"><path d="M1 1h24v24H1zM1 9h24M1 17h24M9 1v24M17 1v24" /></Svg>
        </ViewButton>
        <ViewButton aria-label="Page layout view">
          <Svg w={28} h={26} stroke="#666"><path d="M1 1h26v24H1zM7 5h14v16H7zM10 9h8M10 13h8M10 17h8" /></Svg>
        </ViewButton>
        <ViewButton aria-label="Page break view">
          <Svg w={28} h={26} stroke="#666"><path d="M1 1h26v24H1zM1 15h17V1M10 1v14" /></Svg>
        </ViewButton>
        <PlainButton $ml={18} $w={16} aria-label="Zoom out">
          <Svg w={16} h={16} stroke="#666" strokeWidth={4}><path d="M0 8h16" /></Svg>
        </PlainButton>
        <Zoom type="range" aria-label="Zoom" min={0} max={200} defaultValue={100} />
        <PlainButton $w={16} aria-label="Zoom in">
          <Svg w={16} h={16} stroke="#666" strokeWidth={4}><path d="M0 8h16M8 0v16" /></Svg>
        </PlainButton>
        <Percent>100%</Percent>
      </StatusBar>
    </Window>
  );
}
